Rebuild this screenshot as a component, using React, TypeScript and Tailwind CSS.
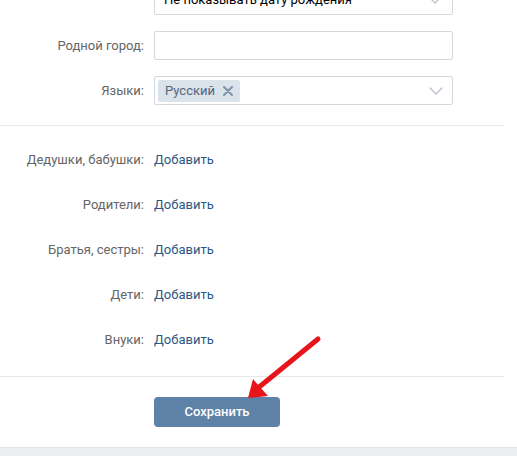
import React from "react";

function Chevron() {
  return (
    <svg width="14" height="8" viewBox="0 0 14 8" fill="none">
      <path d="M1 1l6 6 6-6" stroke="#b8c1cc" strokeWidth="1.3" strokeLinecap="round" strokeLinejoin="round" />
    </svg>
  );
}

const rows = ["Дедушки, бабушки:", "Родители:", "Братья, сестры:", "Дети:", "Внуки:"];

export default function App() {
  return (
    <div
      className="relative w-[517px] h-[456px] overflow-hidden bg-white text-[13px] leading-[18px]"
      style={{ fontFamily: "Roboto, 'Open Sans', Arial, sans-serif" }}
    >
      <div className="flex flex-col">
        {/* Top fields */}
        <div className="flex flex-col gap-[16px] mt-[-15px] pb-[20px] border-b border-[#e7e8ec] w-[504px]">
          <div className="flex items-center">
            <div className="w-[144px] shrink-0" />
            <div className="ml-[10px] w-[299px] h-[30px] border border-[#d3d9de] rounded-[2px] flex items-center justify-between pl-[9px] pr-[10px] text-black">
              <span>Не показывать дату рождения</span>
              <Chevron />
            </div>
          </div>
          <div className="flex items-center">
            <div className="w-[144px] shrink-0 text-right text-[#656565]">Родной город:</div>
            <div className="ml-[10px] w-[299px] h-[29px] border border-[#d3d9de] rounded-[2px]" />
          </div>
          <div className="flex items-center">
            <div className="w-[144px] shrink-0 text-right text-[#656565]">Языки:</div>
            <div className="ml-[10px] w-[299px] h-[29px] border border-[#d3d9de] rounded-[2px] flex items-center justify-between pl-[3px] pr-[9px]">
              <div className="h-[22px] w-[82px] bg-[#dae2ea] rounded-[2px] flex items-center pl-[7px] gap-[8px] text-[#55677d]">
                <span>Русский</span>
                <svg width="10" height="10" viewBox="0 0 10 10">
                  <path d="M1 1l8 8M9 1l-8 8" stroke="#7f93aa" strokeWidth="2" strokeLinecap="round" />
                </svg>
              </div>
              <Chevron />
            </div>
          </div>
        </div>

        {/* Relatives */}
        <div className="flex flex-col gap-[27px] pt-[25px] pb-[27px] border-b border-[#e7e8ec] w-[504px]">
          {rows.map((r) => (
            <div key={r} className="flex items-center h-[18px]">
              <div className="w-[144px] shrink-0 text-right text-[#656565]">{r}</div>
              <a className="ml-[10px] text-[#2a5885] cursor-pointer">Добавить</a>
            </div>
          ))}
        </div>

        {/* Save */}
        <div className="pt-[20px] pb-[20px] pl-[154px]">
          <button className="w-[126px] h-[30px] bg-[#5e81a8] rounded-[4px] text-white text-[13px] font-medium">
            Сохранить
          </button>
        </div>

        <div className="h-[20px] bg-[#edeef0] border-t border-[#e2e3e7]" />
      </div>

      {/* Red arrow overlay */}
      <svg className="absolute left-0 top-0 pointer-events-none" width="517" height="456" viewBox="0 0 517 456">
        <line x1="318" y1="339" x2="258" y2="388" stroke="#e8141b" strokeWidth="5" strokeLinecap="round" />
        <polygon points="248,398 253,379 268,396" fill="#e8141b" />
      </svg>
    </div>
  );
}
